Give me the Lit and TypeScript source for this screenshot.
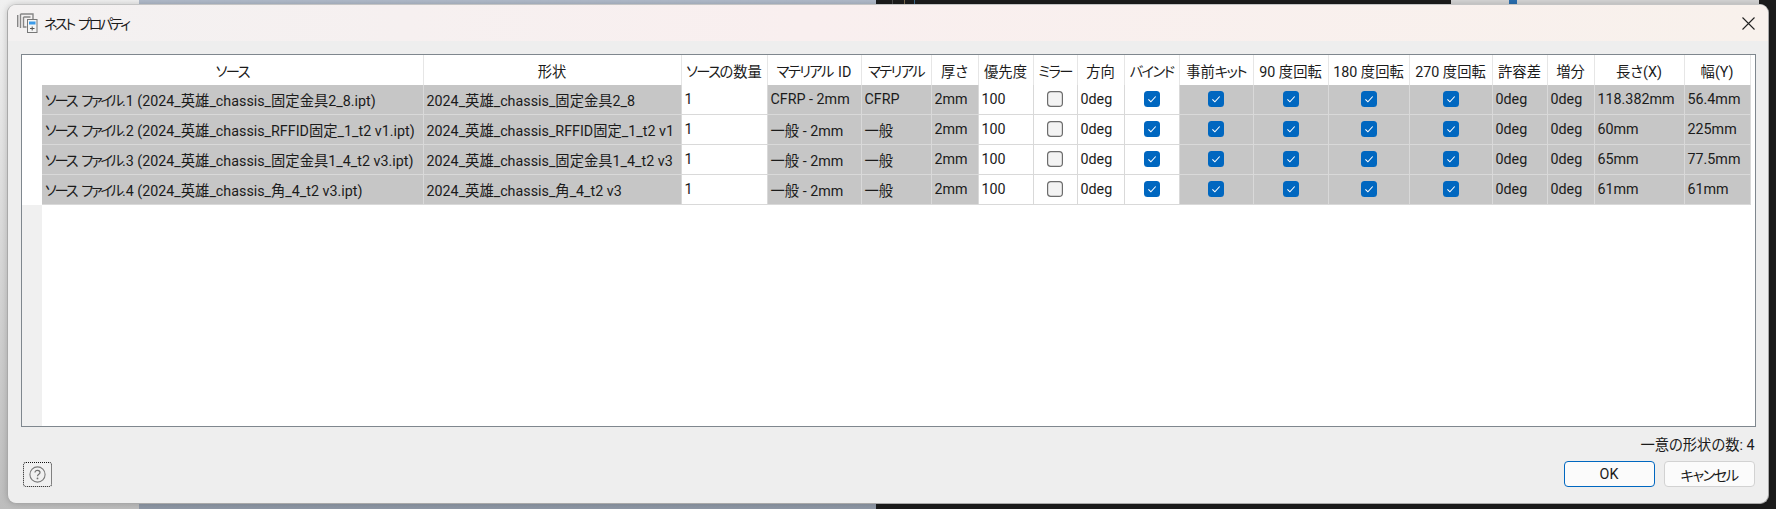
import { html, css, LitElement, svg } from 'lit';
import { customElement } from 'lit/decorators.js';

const headers = ['ソース', '形状', 'ソースの数量', 'マテリアル ID', 'マテリアル', '厚さ', '優先度', 'ミラー', '方向', 'バインド', '事前キット', '90 度回転', '180 度回転', '270 度回転', '許容差', '増分', '長さ(X)', '幅(Y)'];

const rows = [
  { src: 'ソース ファイル.1 (2024_英雄_chassis_固定金具2_8.ipt)', shape: '2024_英雄_chassis_固定金具2_8', mid: 'CFRP - 2mm', mat: 'CFRP', x: '118.382mm', y: '56.4mm' },
  { src: 'ソース ファイル.2 (2024_英雄_chassis_RFFID固定_1_t2 v1.ipt)', shape: '2024_英雄_chassis_RFFID固定_1_t2 v1', mid: '一般 - 2mm', mat: '一般', x: '60mm', y: '225mm' },
  { src: 'ソース ファイル.3 (2024_英雄_chassis_固定金具1_4_t2 v3.ipt)', shape: '2024_英雄_chassis_固定金具1_4_t2 v3', mid: '一般 - 2mm', mat: '一般', x: '65mm', y: '77.5mm' },
  { src: 'ソース ファイル.4 (2024_英雄_chassis_角_4_t2 v3.ipt)', shape: '2024_英雄_chassis_角_4_t2 v3', mid: '一般 - 2mm', mat: '一般', x: '61mm', y: '61mm' },
];

const tick = svg`<path d="M4.4 8.3l2.5 2.5 4.8-5.3" fill="none" stroke="#fff" stroke-width="1.1"/>`;

// the original UI font has narrow kana, so runs of katakana get tightened
const narrow = (value: string) =>
  value.split(/([\u30a0-\u30ff]+(?: [\u30a0-\u30ff]+)* ?)/).map((part, i) => (i % 2 ? html`<span class="kana">${part}</span>` : part));

@customElement('app-root')
export class AppRoot extends LitElement {
  static styles = css`
    :host {
      display: block;
      position: relative;
      width: 1776px;
      height: 509px;
      overflow: hidden;
      background: #1c1c1c;
      font-family: Roboto, "Noto Sans CJK JP", sans-serif;
      font-feature-settings: "palt";
      font-size: 14.3px;
      color: #1b1b1b;
    }
    .kana {
      letter-spacing: -1.6px;
      word-spacing: 3.5px;
    }
    .cell.ro .kana {
      letter-spacing: -2.2px;
    }
    .name .kana {
      letter-spacing: -2.4px;
    }
    .backdrop {
      display: flex;
      height: 100%;
    }
    .bd-left {
      width: 139px;
      background: linear-gradient(#f0f0f0, #bdbdbd);
    }
    .bd-blue {
      width: 737px;
      background: linear-gradient(#b1bbca, #8e97a5);
    }
    .bd-dark {
      width: 575px;
      background:
        linear-gradient(#4a4a4a, #4a4a4a) 16px 0 / 1px 4px no-repeat,
        linear-gradient(#7a6a50, #7a6a50) 28px 0 / 1px 4px no-repeat,
        linear-gradient(#3f6a8a, #3f6a8a) 38px 0 / 1px 4px no-repeat;
    }
    .bd-light {
      width: 308px;
      height: 5px;
      background: #d4d4d4;
      padding-left: 58px;
      box-sizing: border-box;
    }
    .bd-mark {
      display: block;
      width: 8px;
      height: 5px;
      background: #2a6fb0;
    }
    .dialog {
      position: absolute;
      left: 7px;
      top: 4px;
      width: 1762px;
      height: 499.5px;
      box-sizing: border-box;
      border: 1px solid #a9a9a9;
      border-top-color: #c4c4c4;
      border-radius: 9px;
      background: #eeeeee;
      overflow: hidden;
      display: flex;
      flex-direction: column;
      box-shadow: 0 0 6px rgba(0, 0, 0, 0.18);
    }
    .titlebar {
      height: 36px;
      flex: none;
      display: flex;
      align-items: center;
      padding: 0 13px 0 9px;
      gap: 6px;
      background: linear-gradient(90deg, #f3f1f1 0%, #f9efef 45%, #f8f1ec 100%);
      font-size: 14px;
    }
    .titlebar .name {
      flex: 1;
    }
    .frame {
      margin: 13px 12.5px 0 13px;
      height: 373px;
      flex: none;
      box-sizing: border-box;
      border: 1px solid #7f878e;
      background: #fff;
      display: flex;
    }
    .gutter {
      width: 20px;
      flex: none;
      display: flex;
      flex-direction: column;
    }
    .gutter i {
      display: block;
      height: 150px;
      background: #fff;
    }
    .gutter b {
      display: block;
      flex: 1;
      background: #f0f0f0;
    }
    .grid {
      display: grid;
      grid-template-columns: 381.5px 258px 86px 94px 70px 47px 55px 44px 47px 55px 74px 75px 81px 83px 55px 47px 90px 66px;
      grid-template-rows: 30px repeat(4, 29.9px);
      align-self: start;
    }
    .cell {
      box-sizing: border-box;
      border-right: 1px solid #d9d9d9;
      border-bottom: 1px solid #d9d9d9;
      display: flex;
      align-items: center;
      padding-left: 3px;
      white-space: pre;
      overflow: hidden;
      background: #fff;
    }
    .cell.ro {
      background: #c6c6c6;
    }
    .cell.head {
      border-bottom: none;
      justify-content: center;
      padding-left: 0;
      border-right-color: #e6e6e6;
    }
    .cell.box {
      justify-content: center;
      padding-left: 0;
    }
    .check {
      width: 16px;
      height: 16px;
      display: block;
    }
    .footer {
      flex: 1;
      display: flex;
      flex-direction: column;
      align-items: flex-end;
      padding: 8px 13.5px 0 15px;
    }
    .count {
      font-size: 14.3px;
      line-height: 20px;
    }
    .actions {
      align-self: stretch;
      display: flex;
      align-items: center;
      gap: 9px;
      margin-top: 6px;
    }
    .help {
      width: 29px;
      height: 25px;
      box-sizing: border-box;
      border: 1px dotted #111;
      border-radius: 3px;
      background: #f0f0f0;
      display: flex;
      align-items: center;
      justify-content: center;
      margin-right: auto;
    }
    .btn {
      width: 91px;
      height: 26px;
      box-sizing: border-box;
      border: 1px solid #d2d2d2;
      border-radius: 4px;
      background: #fbfbfb;
      display: flex;
      align-items: center;
      justify-content: center;
      font-size: 14.3px;
      white-space: pre;
    }
    .btn.primary {
      border-color: #0067c0;
    }
  `;

  private checkbox(on: boolean) {
    return on
      ? html`<svg class="check" viewBox="0 0 16 16">
          <rect width="16" height="16" rx="3.5" fill="#0067c0"/>${tick}
        </svg>`
      : html`<svg class="check" viewBox="0 0 16 16">
          <rect x=".6" y=".6" width="14.8" height="14.8" rx="3.2" fill="#f3f3f3" stroke="#6c6c6c" stroke-width="1.2"/>
        </svg>`;
  }

  private text(value: string, ro = false) {
    return html`<div class="cell ${ro ? 'ro' : ''}"><span>${narrow(value)}</span></div>`;
  }

  private box(on: boolean, ro = false) {
    return html`<div class="cell box ${ro ? 'ro' : ''}">${this.checkbox(on)}</div>`;
  }

  render() {
    return html`
      <div class="backdrop">
        <div class="bd-left"></div>
        <div class="bd-blue"></div>
        <div class="bd-dark"></div>
        <div class="bd-light"><span class="bd-mark"></span></div>
      </div>
      <div class="dialog">
        <div class="titlebar">
          <svg width="21" height="20" viewBox="0 0 21 20">
            <path d="M.7 2v12M3.5 1v14M3.5 1h12.5v6M6.5 4h7M6.5 4v10h3" fill="none" stroke="#868686" stroke-width="1.4"/>
            <rect x="10.5" y="6.5" width="9.5" height="13" fill="#f4f4f4" stroke="#777"/>
            <rect x="12" y="8.5" width="6.5" height="3" fill="#3b9bea"/>
            <path d="M13 15.5h4.5M15.2 13.5v4" stroke="#555"/>
          </svg>
          <span class="name">${narrow('ネスト プロパティ')}</span>
          <svg width="13" height="13" viewBox="0 0 13 13">
            <path d="M.5.5l12 12M12.5.5l-12 12" stroke="#222" stroke-width="1.1"/>
          </svg>
        </div>
        <div class="frame">
          <div class="gutter"><i></i><b></b></div>
          <div class="grid">
            ${headers.map((h) => html`<div class="cell head"><span>${narrow(h)}</span></div>`)}
            ${rows.map(
              (r) => html`
                ${this.text(r.src, true)}${this.text(r.shape, true)}${this.text('1')}
                ${this.text(r.mid, true)}${this.text(r.mat, true)}${this.text('2mm', true)}
                ${this.text('100')}${this.box(false)}${this.text('0deg')}${this.box(true)}
                ${this.box(true, true)}${this.box(true, true)}${this.box(true, true)}${this.box(true, true)}
                ${this.text('0deg', true)}${this.text('0deg', true)}${this.text(r.x, true)}${this.text(r.y, true)}
              `
            )}
          </div>
        </div>
        <div class="footer">
          <div class="count">一意の形状の数: 4</div>
          <div class="actions">
            <div class="help">
              <svg width="17" height="17" viewBox="0 0 17 17">
                <circle cx="8.5" cy="8.5" r="7.6" fill="none" stroke="#7a7a7a" stroke-width="1.1"/>
                <path d="M6 6.6c0-1.5 1.1-2.3 2.5-2.3s2.5.9 2.5 2.1c0 1.9-2.5 1.8-2.5 3.8" fill="none" stroke="#6f6f6f" stroke-width="1.2"/>
                <circle cx="8.5" cy="12.4" r=".9" fill="#6f6f6f"/>
              </svg>
            </div>
            <div class="btn primary">OK</div>
            <div class="btn"><span>${narrow('キャンセル')}</span></div>
          </div>
        </div>
      </div>
    `;
  }
}
